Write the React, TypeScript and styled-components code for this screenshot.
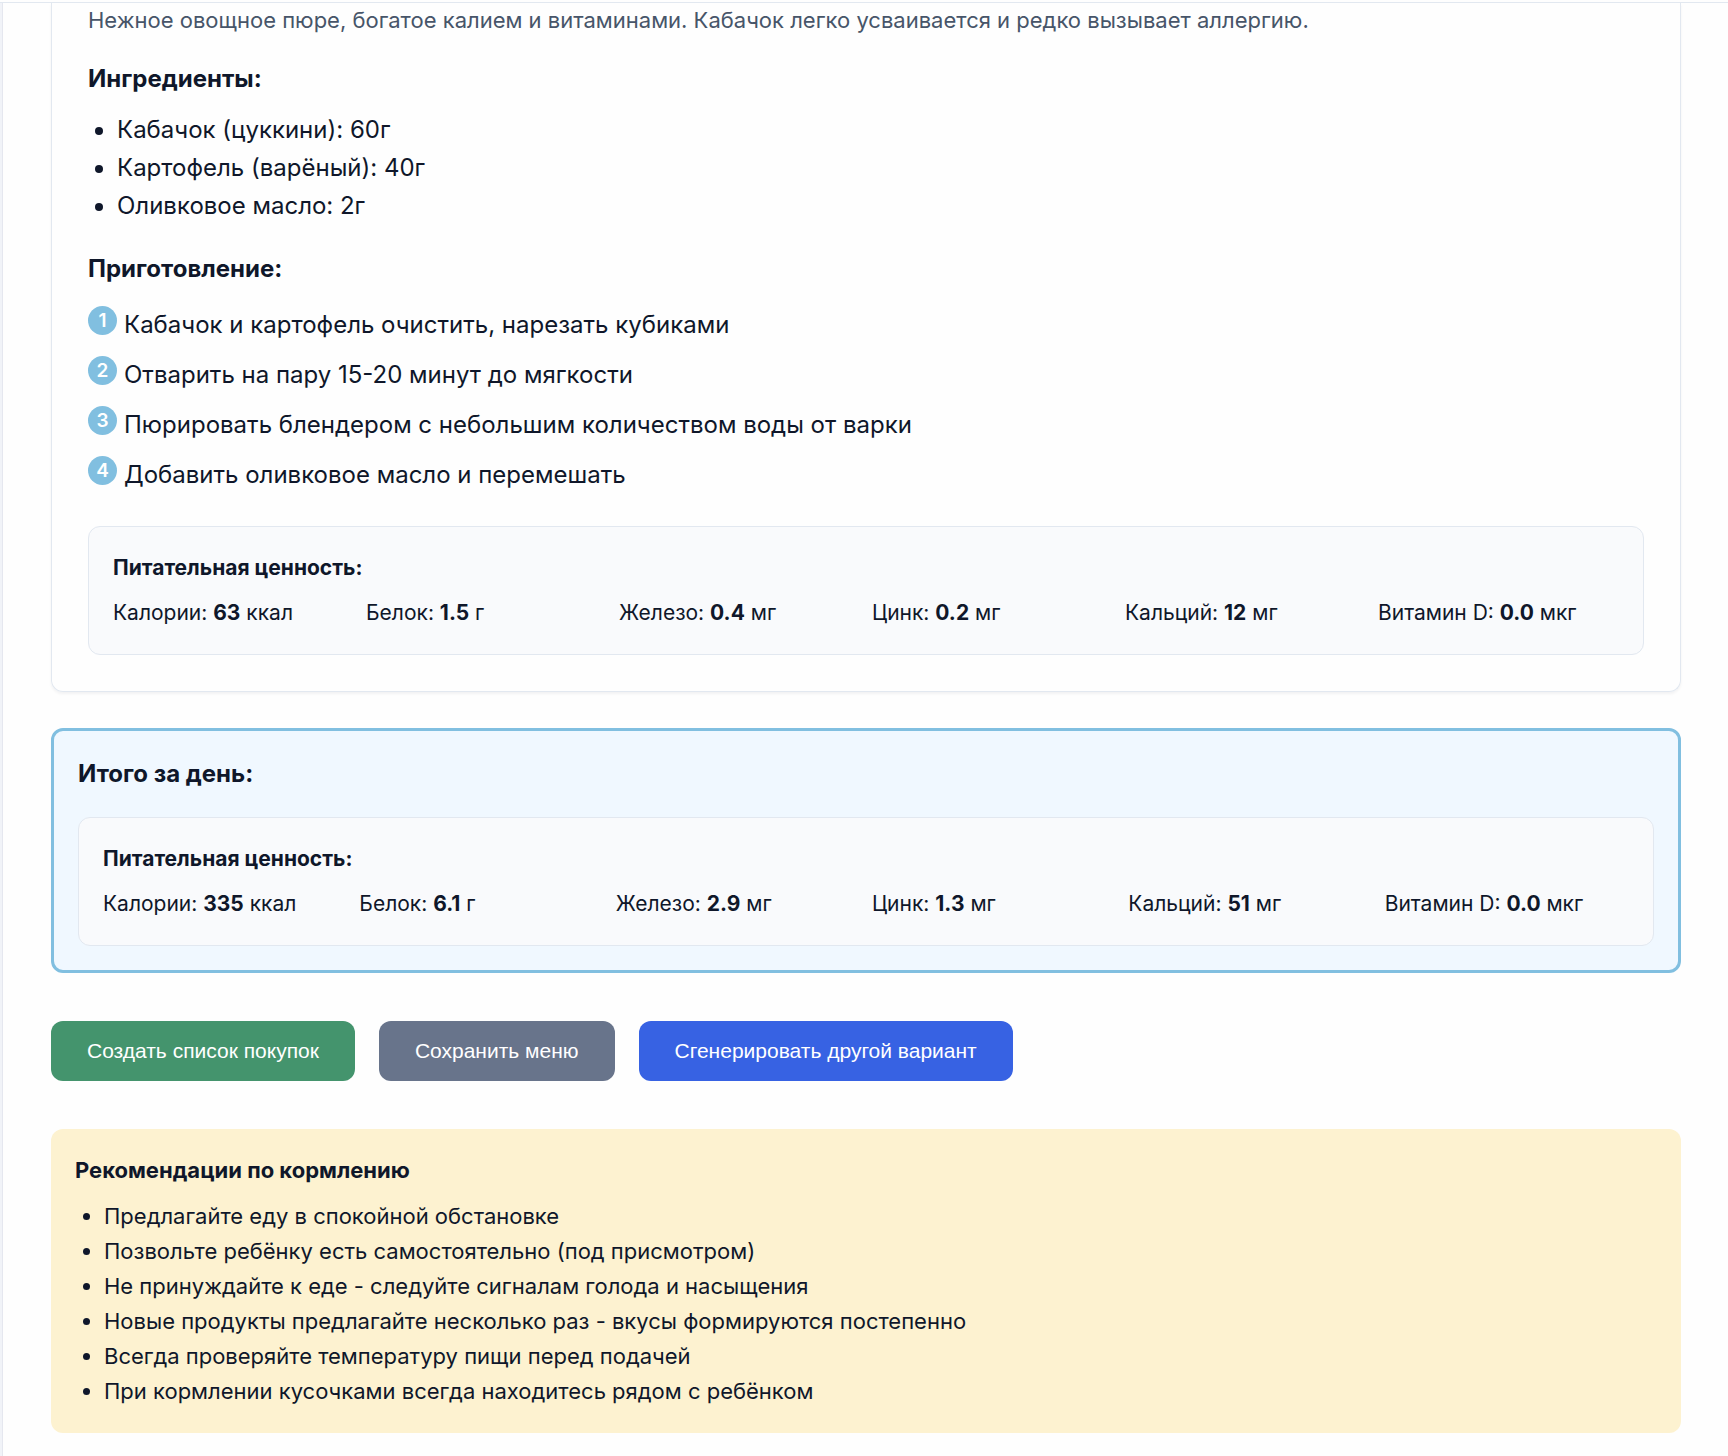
import React from "react";
import styled, { createGlobalStyle } from "styled-components";

const GlobalStyle = createGlobalStyle`
  *, *::before, *::after { box-sizing: border-box; }
  body {
    margin: 0;
    background: #fefefe;
    color: #0f172a;
    font-family: Inter, "Noto Sans", sans-serif;
    font-size: 24px;
    line-height: 38px;
  }
  h2, h3, h4, p, ul, ol { margin: 0; padding: 0; }
`;

const Shell = styled.div`
  display: flex;
  flex-direction: column;
  min-height: 100vh;
`;

const TopEdge = styled.header`
  height: 3px;
  border-bottom: 1px solid #e2e8f0;
`;

const Body = styled.div`
  display: flex;
  flex: 1;
`;

const SideEdge = styled.aside`
  width: 3px;
  flex: none;
  background: #f1f3f8;
  border-right: 1px solid #e5e7ef;
`;

const Main = styled.main`
  flex: 1;
  min-width: 0;
  padding: 0 47px 24px 48px;
`;

const RecipeCard = styled.article`
  padding: 0 36px 36px;
  border: 1px solid #e2e8f0;
  border-top: none;
  border-radius: 0 0 12px 12px;
  box-shadow: 0 2px 3px rgba(15, 23, 42, 0.05);
`;

const Description = styled.p`
  color: #475569;
  font-size: 22px;
  line-height: 34px;
  margin-bottom: 23px;
`;

const Heading = styled.h3`
  font-size: 24px;
  line-height: 38px;
  font-weight: 700;
`;

const Ingredients = styled.ul`
  padding-left: 29px;
  margin: 13px 0 25px;
`;

const Steps = styled.ol`
  display: grid;
  gap: 12px;
  list-style: none;
  margin: 18px 0 32px;
`;

const Step = styled.li`
  display: flex;
  align-items: flex-start;
  gap: 7px;
`;

const StepNumber = styled.span`
  flex: none;
  width: 29px;
  height: 29px;
  border-radius: 50%;
  background: #81bfe0;
  color: #fff;
  font-size: 19px;
  line-height: 29px;
  font-weight: 600;
  text-align: center;
`;

const NutritionBox = styled.section`
  padding: 24px;
  border: 1px solid #e2e8f0;
  border-radius: 12px;
  background: #f9fafc;
`;

const NutritionTitle = styled.h4`
  font-size: 21px;
  line-height: 33px;
  font-weight: 700;
  margin-bottom: 12px;
`;

const NutritionGrid = styled.div`
  display: grid;
  grid-template-columns: repeat(auto-fit, minmax(230px, 1fr));
  gap: 12px;
  font-size: 21px;
  line-height: 34px;

  strong { font-weight: 700; }
`;

const Summary = styled.section`
  margin-top: 36px;
  padding: 24px;
  border: 3px solid #81bfe0;
  border-radius: 12px;
  background: #f0f8ff;

  ${Heading} { margin-bottom: 24px; }
`;

const Actions = styled.div`
  display: flex;
  flex-wrap: wrap;
  gap: 24px;
  margin: 48px 0;
`;

const ActionButton = styled.button<{ $color: string }>`
  height: 60px;
  padding: 0 36px;
  border: none;
  border-radius: 12px;
  background: ${(p) => p.$color};
  color: #fff;
  font-family: "Liberation Sans", Arial, sans-serif;
  font-size: 21px;
  cursor: pointer;
`;

const Tips = styled.section`
  padding: 24px;
  border-radius: 12px;
  background: #fdf2d0;
`;

const TipsTitle = styled.h3`
  font-size: 22px;
  line-height: 34px;
  font-weight: 700;
  margin-bottom: 12px;
`;

const TipsList = styled.ul`
  padding-left: 29px;
  font-size: 22px;
  line-height: 35px;
`;

type Nutrient = [label: string, value: string, unit: string];

const ingredients = ["Кабачок (цуккини): 60г", "Картофель (варёный): 40г", "Оливковое масло: 2г"];

const steps = [
  "Кабачок и картофель очистить, нарезать кубиками",
  "Отварить на пару 15-20 минут до мягкости",
  "Пюрировать блендером с небольшим количеством воды от варки",
  "Добавить оливковое масло и перемешать",
];

const recipeNutrients: Nutrient[] = [
  ["Калории", "63", "ккал"],
  ["Белок", "1.5", "г"],
  ["Железо", "0.4", "мг"],
  ["Цинк", "0.2", "мг"],
  ["Кальций", "12", "мг"],
  ["Витамин D", "0.0", "мкг"],
];

const dayNutrients: Nutrient[] = [
  ["Калории", "335", "ккал"],
  ["Белок", "6.1", "г"],
  ["Железо", "2.9", "мг"],
  ["Цинк", "1.3", "мг"],
  ["Кальций", "51", "мг"],
  ["Витамин D", "0.0", "мкг"],
];

const tips = [
  "Предлагайте еду в спокойной обстановке",
  "Позвольте ребёнку есть самостоятельно (под присмотром)",
  "Не принуждайте к еде - следуйте сигналам голода и насыщения",
  "Новые продукты предлагайте несколько раз - вкусы формируются постепенно",
  "Всегда проверяйте температуру пищи перед подачей",
  "При кормлении кусочками всегда находитесь рядом с ребёнком",
];

function Nutrition({ items }: { items: Nutrient[] }) {
  return (
    <NutritionBox>
      <NutritionTitle>Питательная ценность:</NutritionTitle>
      <NutritionGrid>
        {items.map(([label, value, unit]) => (
          <span key={label}>
            {label}: <strong>{value}</strong> {unit}
          </span>
        ))}
      </NutritionGrid>
    </NutritionBox>
  );
}

export default function App() {
  return (
    <Shell>
      <GlobalStyle />
      <TopEdge />
      <Body>
        <SideEdge />
        <Main>
          <RecipeCard>
            <Description>
              Нежное овощное пюре, богатое калием и витаминами. Кабачок легко усваивается и редко вызывает аллергию.
            </Description>
            <Heading>Ингредиенты:</Heading>
            <Ingredients>
              {ingredients.map((text) => (
                <li key={text}>{text}</li>
              ))}
            </Ingredients>
            <Heading>Приготовление:</Heading>
            <Steps>
              {steps.map((text, i) => (
                <Step key={text}>
                  <StepNumber>{i + 1}</StepNumber>
                  <span>{text}</span>
                </Step>
              ))}
            </Steps>
            <Nutrition items={recipeNutrients} />
          </RecipeCard>

          <Summary>
            <Heading>Итого за день:</Heading>
            <Nutrition items={dayNutrients} />
          </Summary>

          <Actions>
            <ActionButton type="button" $color="#44946d">Создать список покупок</ActionButton>
            <ActionButton type="button" $color="#68748b">Сохранить меню</ActionButton>
            <ActionButton type="button" $color="#3762e3">Сгенерировать другой вариант</ActionButton>
          </Actions>

          <Tips>
            <TipsTitle>Рекомендации по кормлению</TipsTitle>
            <TipsList>
              {tips.map((text) => (
                <li key={text}>{text}</li>
              ))}
            </TipsList>
          </Tips>
        </Main>
      </Body>
    </Shell>
  );
}
